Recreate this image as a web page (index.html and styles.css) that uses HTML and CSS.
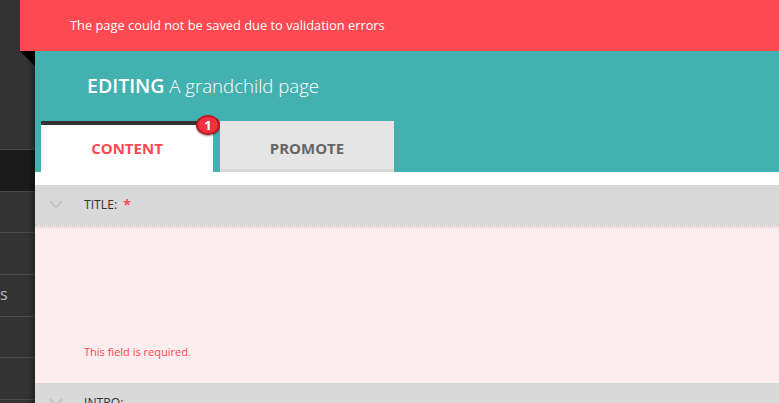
FILE: index.html
```html
<!DOCTYPE html>
<html lang="en">
<head>
  <meta charset="UTF-8">
  <title>Editing A grandchild page</title>
  <link rel="stylesheet" href="styles.css">
</head>
<body>
  <div class="layout">
    <nav class="sidebar">
      <div class="side-top"></div>
      <div class="side-item side-item-active"></div>
      <div class="side-item"></div>
      <div class="side-item"></div>
      <div class="side-item"><span class="side-label">s</span></div>
      <div class="side-item"></div>
      <div class="side-item"></div>
      <div class="side-item"></div>
    </nav>
    <main class="main">
      <div class="message">The page could not be saved due to validation errors</div>
      <div class="content">
        <span class="fold"></span>
        <header class="page-header">
          <h1 class="page-title"><b>EDITING</b> A grandchild page</h1>
          <div class="tabs">
            <div class="tab tab-active">CONTENT<span class="badge">1</span></div>
            <div class="tab">PROMOTE</div>
          </div>
        </header>
        <section class="panel">
          <div class="field-head">
            <svg class="chevron" width="14" height="9" viewBox="0 0 14 9"><path d="M1 1l6 6.5 6-6.5" fill="none" stroke="#c4c4c4" stroke-width="2"/></svg>
            <span class="field-label">TITLE:</span><span class="required">*</span>
          </div>
          <div class="field-body">
            <p class="field-error">This field is required.</p>
          </div>
          <div class="field-head">
            <svg class="chevron" width="14" height="9" viewBox="0 0 14 9"><path d="M1 1l6 6.5 6-6.5" fill="none" stroke="#c4c4c4" stroke-width="2"/></svg>
            <span class="field-label">INTRO:</span>
          </div>
        </section>
      </div>
    </main>
  </div>
</body>
</html>
```

FILE: styles.css
```css
html, body {
  margin: 0;
  height: 403px;
  overflow: hidden;
}

body {
  background-color: #fff;
  font-family: "Open Sans", sans-serif;
}

.layout {
  display: flex;
  height: 403px;
}

.sidebar {
  position: relative;
  width: 35px;
  flex: none;
  overflow: hidden;
  background-color: #333;
}

/* shadow the page throws on the menu */
.sidebar::after {
  content: "";
  position: absolute;
  top: 0;
  right: 0;
  bottom: 0;
  width: 8px;
  background: linear-gradient(to right, rgba(0, 0, 0, 0), rgba(0, 0, 0, 0.3));
}

.side-top {
  height: 149px;
}

.side-item {
  box-sizing: border-box;
  height: 41.67px;
  border-top: 1px solid #4a4a4a;
  color: #bbb;
  font-size: 16px;
  line-height: 38px;
  overflow: hidden;
}

.side-item-active {
  background-color: #1a1a1a;
}

.side-label {
  display: block;
}

.main {
  flex: 1;
  min-width: 0;
}

.message {
  position: relative;
  height: 51px;
  margin-left: -15px;
  padding-left: 50px;
  background-color: #fd4a52;
  color: #fff;
  font-size: 12.85px;
  line-height: 51px;
}

.content {
  position: relative;
}

.fold {
  position: absolute;
  left: -15px;
  top: 0;
  border-top: 15px solid #000;
  border-left: 15px solid transparent;
}

.page-header {
  height: 121px;
  background-color: #43b1b0;
  display: flex;
  flex-direction: column;
  justify-content: flex-end;
}

.page-title {
  margin: 0 0 21px 52px;
  color: #fff;
  font-size: 18.6px;
  font-weight: 300;
  line-height: 28px;
}

.page-title b {
  font-size: 19.5px;
  font-weight: 600;
}

.tabs {
  display: flex;
  gap: 7px;
  padding-left: 6px;
}

.tab {
  position: relative;
  box-sizing: border-box;
  width: 174px;
  height: 51px;
  border-bottom: 3px solid #d8d8d8;
  background-color: #e5e5e5;
  color: #666;
  font-size: 15px;
  font-weight: 700;
  line-height: 55px;
  text-align: center;
}

.tab-active {
  width: 172px;
  border-top: 4px solid #333;
  border-bottom: 0;
  background-color: #fff;
  color: #fd4a52;
  line-height: 47px;
}

.badge {
  position: absolute;
  right: -7px;
  top: -10px;
  box-sizing: border-box;
  width: 24px;
  height: 20px;
  border: 2px solid #c4161f;
  border-radius: 50%;
  background-color: #f03240;
  box-shadow: 0 1px 2px rgba(0, 0, 0, 0.5);
  color: #fff;
  font-size: 13px;
  line-height: 16px;
}

.panel {
  height: 218px;
  margin-top: 13px;
  overflow: hidden;
}

.field-head {
  position: relative;
  display: flex;
  align-items: center;
  height: 40px;
  padding-bottom: 1px;
  box-sizing: border-box;
  background-color: #d9d9d9;
}

.chevron {
  margin: 0 21px 0 14px;
  flex: none;
}

.field-label {
  color: #333;
  font-size: 12.2px;
}

.required {
  margin-left: 6px;
  color: #fd4a52;
  font-size: 14px;
  font-weight: 700;
}

.field-body {
  box-sizing: border-box;
  height: 158px;
  padding: 118px 0 0 49px;
  background-color: #feedee;
  border-top: 1px dotted #c4c4c4;
  box-shadow: inset 0 3px 3px -2px rgba(0, 0, 0, 0.12);
}

.field-error {
  margin: 0;
  color: #fd4a52;
  font-size: 11px;
  line-height: 15px;
}
```
